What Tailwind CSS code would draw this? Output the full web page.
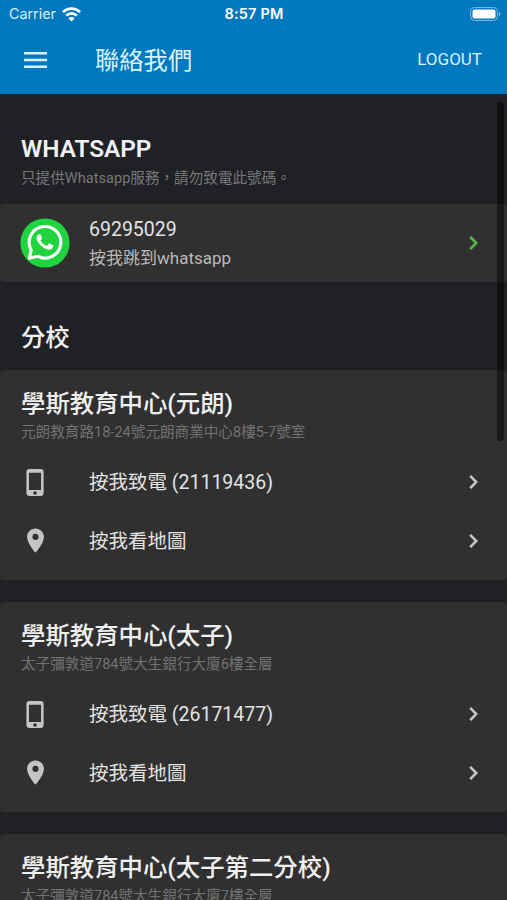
<!DOCTYPE html>
<html lang="zh-Hant">
<head>
<meta charset="utf-8">
<meta name="viewport" content="width=device-width">
<title>聯絡我們</title>
<script src="https://cdn.jsdelivr.net/npm/@tailwindcss/browser@4"></script>
</head>
<body class="h-[900px] overflow-hidden bg-[#202124] font-['Roboto','Noto_Sans_CJK_TC',sans-serif] text-[#e3e3e3]">
<svg class="hidden">
  <symbol id="phone" viewBox="0 0 24 24"><path fill="currentColor" fill-rule="evenodd" d="M7 .8h9.200a2.500 2.500 0 0 1 2.500 2.500v17.400a2.500 2.500 0 0 1-2.500 2.500H7a2.500 2.500 0 0 1-2.500-2.500V3.300A2.500 2.500 0 0 1 7 .8zM6.600 4v14.200h10V4zm5 15.200a1.500 1.500 0 1 0 0 3 1.500 1.500 0 0 0 0-3z"/></symbol>
  <symbol id="pin" viewBox="0 0 24 24"><path fill="currentColor" d="M12 2C8.130 2 5 5.130 5 9c0 5.250 7 13 7 13s7-7.750 7-13c0-3.870-3.130-7-7-7zm0 9.500a2.500 2.500 0 1 1 0-5 2.500 2.500 0 0 1 0 5z"/></symbol>
  <symbol id="chevron" viewBox="0 0 10 16"><path fill="none" stroke="currentColor" stroke-width="2.600" d="M1.200 1.800 7.200 8l-6 6.200"/></symbol>
</svg>
<div class="relative h-full overflow-hidden">
  <header class="h-[94px] bg-[#0278be] text-white">
    <div class="grid h-7 grid-cols-3 items-center pl-[9px] pr-[6px] font-['Inter','Roboto',sans-serif]">
      <div class="flex items-center gap-[6px] text-[14.300px] text-[#d5effc]">
        <span>Carrier</span>
        <svg class="h-[15px] w-[19px]" viewBox="0 0 19 15" fill="none" stroke="#fff" stroke-width="2.700"><path d="M1 5.200c4.700-4.700 12.300-4.700 17 0M4.200 8.600c2.900-2.900 7.700-2.900 10.600 0"/><path fill="#fff" stroke="none" d="M9.500 14.500 6.300 11.300c1.800-1.600 4.600-1.600 6.400 0z"/></svg>
      </div>
      <span class="pr-[2px] text-center text-[14.500px] font-semibold tracking-[0.150px]">8:57 PM</span>
      <svg class="h-[14px] w-[31px] justify-self-end" viewBox="0 0 31 14"><rect x=".6" y=".6" width="26.800" height="12.800" rx="4" fill="none" stroke="#80bbdf"/><rect x="2.500" y="2.500" width="23" height="9" rx="2.300" fill="#fff"/><path fill="#80bbdf" d="M29 4.500c2 1 2 4 0 5z"/></svg>
    </div>
    <div class="flex h-[64px] items-center pl-6 pr-[25px]">
      <svg class="h-4 w-[23px]" viewBox="0 0 23 16" fill="#d9f2ff"><path d="M0 0h23v2.600H0zM0 6.700h23v2.600H0zM0 13.400h23V16H0z"/></svg>
      <h1 class="ml-12 pt-px text-[24.300px] leading-8 text-[#d9f2ff]">聯絡我們</h1>
      <span class="ml-auto pb-[3px] text-[17px] leading-6 text-[#d9f2ff]">LOGOUT</span>
    </div>
  </header>
  <main>
    <section class="h-[110px] px-[21px] pt-[38px]">
      <h2 class="text-[24.300px] font-semibold leading-[34px] text-[#f2f2f4]">WHATSAPP</h2>
      <p class="text-[14.600px] leading-6 text-[#77787a]">只提供Whatsapp服務，請勿致電此號碼。</p>
    </section>
    <section class="flex h-[78px] items-center rounded bg-[#303030] pl-5 pr-[28px]">
      <svg class="h-[50px] w-[50px]" viewBox="0 0 50 50"><circle cx="25" cy="25" r="24.600" fill="#20d43f"/><path fill="none" stroke="#fff" stroke-width="3.100" stroke-linejoin="round" d="M9.300 40.200l2-8A15.800 15.800 0 1 1 17.500 38.200z"/><path fill="#fff" transform="translate(3.700 2.900) scale(.79)" d="M18.700 16.800h1.700c.7 0 .9.300 1.200 1l1.500 3.800c.2.700 0 1-1.900 3.300 1.900 3.300 4.200 5.200 7.400 6.500.5.200.8.100 1.200-.3l1.800-2.300c.4-.5.800-.5 1.400-.2l3.800 1.800c.6.300.8.600.7 1.400-.4 3.300-3.300 4.900-5.800 4.600-2-.3-5.700-1.500-9-4.400-3-2.700-5.500-6.300-6.100-8.400-.8-2.800.3-5.700 2.100-6.800z"/></svg>
      <div class="ml-[19px] pt-[2px]">
        <p class="text-[19.500px] leading-7">69295029</p>
        <p class="text-[17px] leading-7 text-[#bababa]">按我跳到whatsapp</p>
      </div>
      <svg class="ml-auto h-4 w-[10px] text-[#55b84c]"><use href="#chevron"/></svg>
    </section>
    <h2 class="h-[88px] px-[21px] pt-[39px] text-[24.300px] font-medium leading-[34px] text-[#f2f2f4]">分校</h2>
    <div class="flex flex-col gap-[22px]">
      <section class="h-[210px] rounded bg-[#303030] pl-[21px] pr-[28px] pt-[17px]">
        <h3 class="text-[24.400px] font-medium leading-[34px] text-[#f0f0f0]">學斯教育中心(元朗)</h3>
        <p class="text-[14.600px] leading-[23px] text-[#727272]">元朗教育路18-24號元朗商業中心8樓5-7號室</p>
        <div class="mt-[9px] flex h-[58px] items-center"><svg class="h-[29px] w-[29px] text-[#c4c4c4]"><use href="#phone"/></svg><span class="ml-[39px] pt-px text-[19.500px]">按我致電 (21119436)</span><svg class="ml-auto h-4 w-[10px] text-[#c4c4c4]"><use href="#chevron"/></svg></div>
        <div class="flex h-[59px] items-center"><svg class="h-[29px] w-[29px] text-[#c4c4c4]"><use href="#pin"/></svg><span class="ml-[39px] pt-[2px] text-[19.500px]">按我看地圖</span><svg class="ml-auto h-4 w-[10px] text-[#c4c4c4]"><use href="#chevron"/></svg></div>
      </section>
      <section class="h-[210px] rounded bg-[#303030] pl-[21px] pr-[28px] pt-[17px]">
        <h3 class="text-[24.400px] font-medium leading-[34px] text-[#f0f0f0]">學斯教育中心(太子)</h3>
        <p class="text-[14.600px] leading-[23px] text-[#727272]">太子彌敦道784號大生銀行大廈6樓全層</p>
        <div class="mt-[9px] flex h-[58px] items-center"><svg class="h-[29px] w-[29px] text-[#c4c4c4]"><use href="#phone"/></svg><span class="ml-[39px] pt-px text-[19.500px]">按我致電 (26171477)</span><svg class="ml-auto h-4 w-[10px] text-[#c4c4c4]"><use href="#chevron"/></svg></div>
        <div class="flex h-[59px] items-center"><svg class="h-[29px] w-[29px] text-[#c4c4c4]"><use href="#pin"/></svg><span class="ml-[39px] pt-[2px] text-[19.500px]">按我看地圖</span><svg class="ml-auto h-4 w-[10px] text-[#c4c4c4]"><use href="#chevron"/></svg></div>
      </section>
      <section class="h-[210px] rounded bg-[#303030] pl-[21px] pr-[28px] pt-[17px]">
        <h3 class="text-[24.400px] font-medium leading-[34px] text-[#f0f0f0]">學斯教育中心(太子第二分校)</h3>
        <p class="text-[14.600px] leading-[23px] text-[#727272]">太子彌敦道784號大生銀行大廈7樓全層</p>
      </section>
    </div>
  </main>
  <div class="absolute right-[3px] top-[102px] h-[339px] w-[7px] rounded-full bg-black/50"></div>
</div>
</body>
</html>
